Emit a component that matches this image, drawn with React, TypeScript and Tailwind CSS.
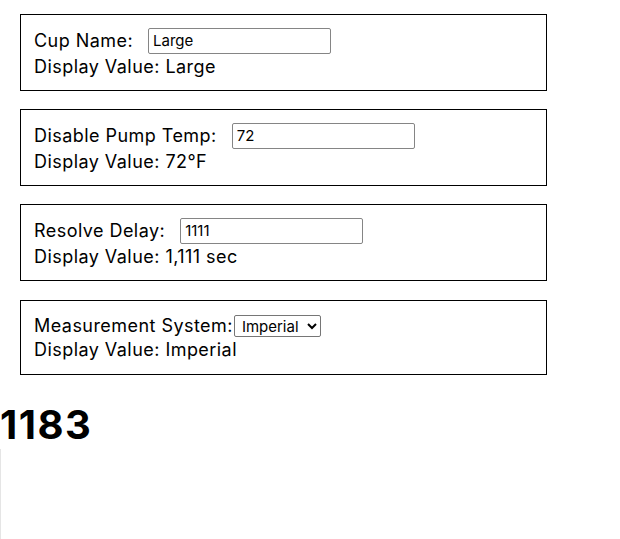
import { useState } from "react";

type FieldProps = {
  label: string;
  value: string;
  display: string;
  onChange: (v: string) => void;
};

const Field = ({ label, value, display, onChange }: FieldProps) => {
  return (
    <section className="w-[527px] border border-black pl-[13px] pt-[12px] pb-[10px]">
      <div className="flex items-center h-[27px]">
        <span className="mr-[15px]">{label}</span>
        <input
          value={value}
          onChange={(e) => onChange(e.target.value)}
          className="w-[183px] h-[26px] border border-[#858585] rounded-[2px] px-[4px] text-[15px] tracking-normal outline-none"
        />
      </div>
      <div className="h-[26px] leading-[26px]">Display Value: {display}</div>
    </section>
  );
};

export default function App() {
  const [cup, setCup] = useState("Large");
  const [temp, setTemp] = useState("72");
  const [delay, setDelay] = useState("1111");
  const [system, setSystem] = useState("Imperial");

  return (
    <main
      className="flex flex-col text-[18px] tracking-[0.45px] text-black bg-white min-h-[539px]"
      style={{ fontFamily: 'Inter, "Liberation Sans", Arial, sans-serif' }}
    >
      <div className="flex flex-col gap-[18px] pl-[20px] pt-[14px]">
        <Field label="Cup Name:" value={cup} display={cup} onChange={setCup} />
        <Field
          label="Disable Pump Temp:"
          value={temp}
          display={`${temp}°F`}
          onChange={setTemp}
        />
        <Field
          label="Resolve Delay:"
          value={delay}
          display={`${Number(delay).toLocaleString("en-US")} sec`}
          onChange={setDelay}
        />
        <section className="mt-[1px] w-[527px] border border-black pl-[13px] pt-[12px] pb-[12px]">
          <div className="flex items-center h-[25px]">
            <span className="mr-[1px]">Measurement System:</span>
            <select
              value={system}
              onChange={(e) => setSystem(e.target.value)}
              className="w-[87px] h-[22px] border border-[#767676] rounded-[2px] text-[15px] tracking-normal pl-[3px] pr-[2px] bg-white"
            >
              <option>Imperial</option>
              <option>Metric</option>
            </select>
          </div>
          <div className="h-[24px] leading-[24px]">Display Value: {system}</div>
        </section>
      </div>
      <h1 className="mt-[26px] text-[40px] font-bold tracking-[1.5px] leading-[48px]">1183</h1>
      <div className="w-px h-[100px] bg-[#e5e5e5]"></div>
    </main>
  );
}
